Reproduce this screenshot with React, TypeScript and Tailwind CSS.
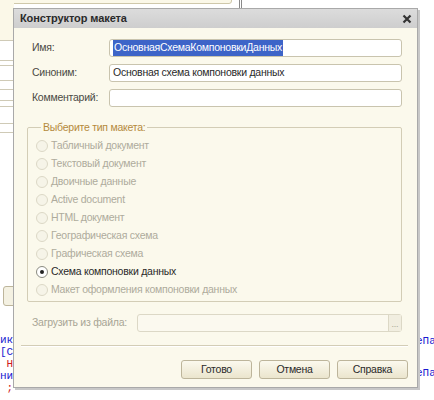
import React from "react";

const layoutTypes = [
  "Табличный документ",
  "Текстовый документ",
  "Двоичные данные",
  "Active document",
  "HTML документ",
  "Географическая схема",
  "Графическая схема",
  "Схема компоновки данных",
  "Макет оформления компоновки данных",
];
const selectedType = "Схема компоновки данных";

function Radio({ label, checked }: { label: string; checked: boolean }) {
  return (
    <div className="flex items-center h-[18px] gap-[3px]">
      <span
        className={`w-[12px] h-[12px] rounded-full border flex items-center justify-center ${
          checked ? "border-[#8a8a80] bg-white" : "border-[#dcd8c6] bg-[#f6f4e8]"
        }`}
      >
        {checked && <span className="w-[4px] h-[4px] rounded-full bg-[#222]" />}
      </span>
      <span className={checked ? "text-[#2a2a2a]" : "text-[#aeab9c]"}>{label}</span>
    </div>
  );
}

function TextField({ children }: { children?: React.ReactNode }) {
  return (
    <div className="flex-1 h-[18px] bg-white border border-[#c9c4ae] rounded-[3px] flex items-center px-[3px] text-[#2a2a2a] overflow-hidden whitespace-nowrap">
      {children}
    </div>
  );
}

function Button({ label }: { label: string }) {
  return (
    <button className="w-[71px] h-[19px] rounded-[3px] border border-[#bdb59b] bg-gradient-to-b from-[#fbf9ee] to-[#ebe5cd] text-[#2a2a2a] flex items-center justify-center">
      {label}
    </button>
  );
}

export default function App() {
  return (
    <div
      className="relative w-[434px] h-[400px] bg-white overflow-hidden text-[10.5px] tracking-[-0.25px]"
      style={{ fontFamily: '"Liberation Sans", Arial, sans-serif' }}
    >
      {/* background app: top field */}
      <div className="absolute left-0 top-[-14px] w-[232px] h-[18px] bg-[#fbf8e8] border border-[#cfc8aa] rounded-[3px]" />
      <div className="absolute left-[239px] top-0 w-[3px] h-[10px] border-x border-[#8a8a8a]" />

      {/* background app: left strip */}
      <div className="absolute left-0 top-0 w-[14px] h-[40px] bg-[#fbf8e8]" />
      <div className="absolute left-0 top-[40px] w-[14px] border-t border-[#cfcab6]" />
      <div className="absolute left-0 top-[60px] w-[14px] h-[6px] border-y border-[#cfcab6]" />
      <div className="absolute left-0 top-[80px] w-[14px] h-[10px] border-y border-[#cfcab6]" />
      <div className="absolute left-0 top-[100px] w-[14px] h-[7px] border-y border-[#cfcab6]" />
      <div className="absolute left-0 top-[123px] w-[14px] h-[10px] border-y border-[#cfcab6]" />
      <div className="absolute left-0 top-[133px] w-[14px] h-[155px] bg-white border-r border-[#e2dfd0]" />
      <div className="absolute left-[3px] top-[286px] w-[20px] h-[20px] rounded-[3px] border border-[#bdb59b] bg-[#f4f1e2]" />
      <div
        className="absolute left-0 top-[334px] text-[11px] leading-[12px] tracking-normal whitespace-pre"
        style={{ fontFamily: '"Liberation Mono", monospace' }}
      >
        <div className="text-[#1a1ad0]">ик</div>
        <div className="text-[#1a1ad0]">[Ст</div>
        <div className="text-[#d01a1a]"> Н</div>
        <div className="text-[#1a1ad0]">ни</div>
        <div className="text-[#d01a1a]"> ;</div>
      </div>
      <div
        className="absolute left-[416px] top-[325px] text-[11px] leading-[32px] tracking-normal text-[#1a1ad0] whitespace-pre"
        style={{ fontFamily: '"Liberation Mono", monospace' }}
      >
        <div>еПа</div>
        <div>еПа</div>
      </div>

      {/* dialog window */}
      <div className="absolute left-[13px] top-[8px] w-[405px] h-[380px] flex flex-col bg-[#fbf9ec] border border-[#a9a9a9] shadow-[2px_2px_0_#c8c8c8]">
        <div className="h-[19px] flex items-center justify-between pl-[6px] pr-[5px] bg-gradient-to-b from-[#dcdcdc] to-[#cecece]">
          <span className="font-bold text-[11px] tracking-[-0.1px] text-[#2a2a2a]">Конструктор макета</span>
          <svg width="10" height="10" viewBox="0 0 10 10">
            <path d="M1.5 1.5 L8.5 8.5 M8.5 1.5 L1.5 8.5" stroke="#333" strokeWidth="2.2" />
          </svg>
        </div>

        <div className="flex-1 flex flex-col pt-[11px] pl-[13px] pr-[15px]">
          <div className="flex flex-col gap-[7px] text-[#4a4a44]">
            <div className="flex items-center">
              <span className="w-[82px] pl-[5px]">Имя:</span>
              <TextField>
                <span className="bg-[#3d64c8] text-white px-[1px]">ОсновнаяСхемаКомпоновкиДанных</span>
              </TextField>
            </div>
            <div className="flex items-center">
              <span className="w-[82px] pl-[5px]">Синоним:</span>
              <TextField>Основная схема компоновки данных</TextField>
            </div>
            <div className="flex items-center">
              <span className="w-[82px] pl-[5px]">Комментарий:</span>
              <TextField />
            </div>
          </div>

          <fieldset className="mt-[13px] h-[182px] border border-[#d3cdb6] rounded-[2px] pl-[8px] pt-[1px]">
            <legend className="ml-[5px] px-[2px] text-[#b58a3c]">Выберите тип макета:</legend>
            {layoutTypes.map((t) => (
              <Radio key={t} label={t} checked={t === selectedType} />
            ))}
          </fieldset>

          <div className="mt-[12px] flex items-center text-[#a8a595]">
            <span className="w-[110px] pl-[5px] whitespace-nowrap">Загрузить из файла:</span>
            <div className="flex-1 h-[18px] bg-[#fbf9ef] border border-[#dcd8c6] rounded-[3px] flex justify-end">
              <span className="w-[13px] h-full border-l border-[#dcd8c6] bg-[#f1eee0] text-[9px] text-[#a8a595] flex items-end justify-center pb-[2px] leading-none">
                ...
              </span>
            </div>
          </div>

          <div className="mt-[13px] -ml-[6px] mr-[-6px] border-t border-[#d3cdb6] border-b border-b-white" />

          <div className="mt-[13px] flex justify-end gap-[7px] -mr-[6px]">
            <Button label="Готово" />
            <Button label="Отмена" />
            <Button label="Справка" />
          </div>
        </div>
      </div>
    </div>
  );
}
